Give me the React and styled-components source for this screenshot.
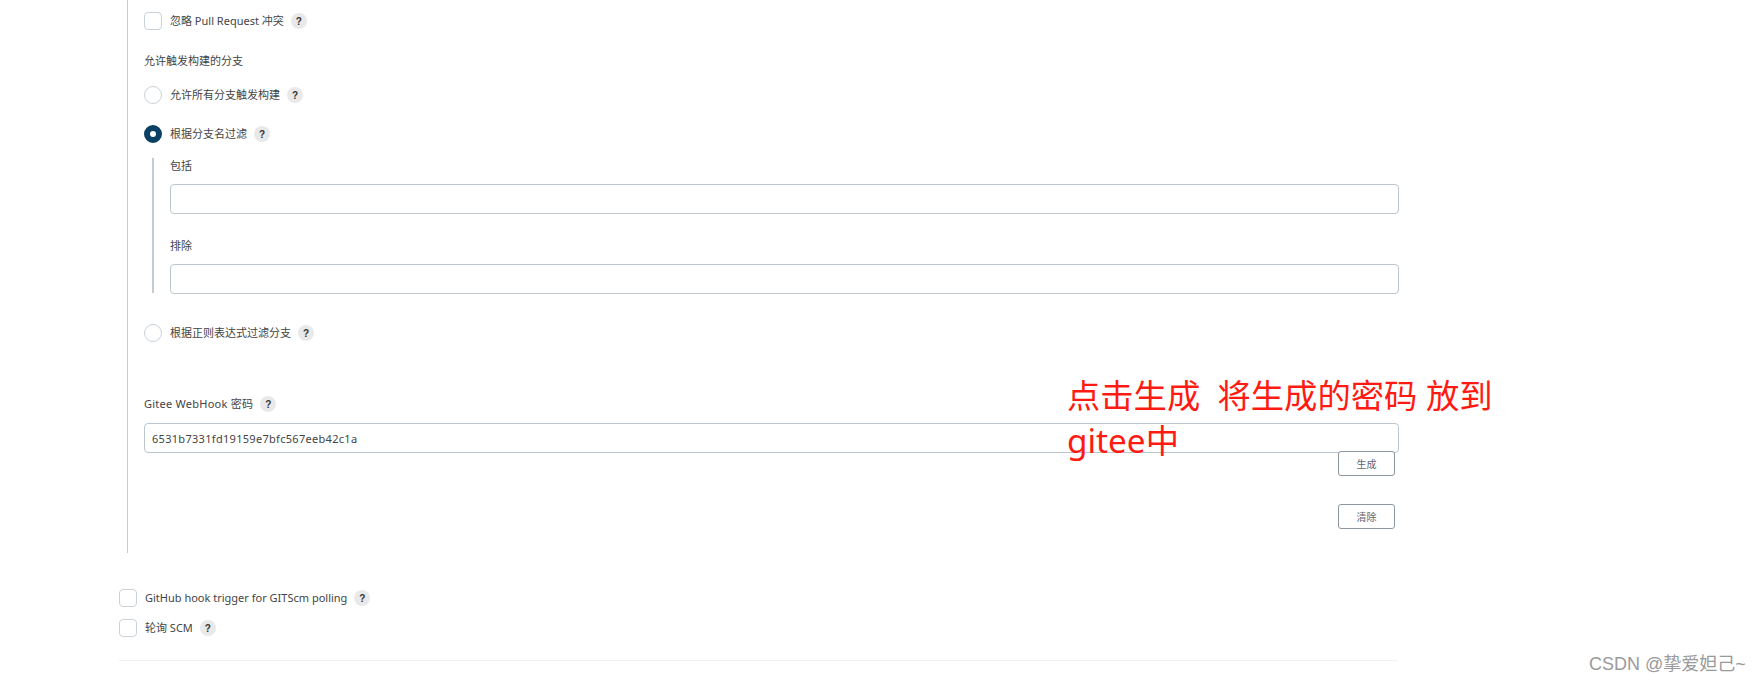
import React from 'react';
import styled, { createGlobalStyle } from 'styled-components';

const GlobalStyle = createGlobalStyle`
  html, body {
    margin: 0;
    padding: 0;
    background: #ffffff;
    overflow: hidden;
  }
  body {
    font-family: "Noto Sans", "Noto Sans CJK SC", sans-serif;
    color: #444444;
  }
`;

const Page = styled.div`
  position: relative;
  width: 1761px;
  height: 682px;
  padding-left: 119px;
  box-sizing: border-box;
`;

const Section = styled.div`
  width: 1272px;
  height: 553px;
  margin-left: 8px;
  padding: 12px 0 0 16px;
  border-left: 1px solid #c3ccd1;
  box-sizing: border-box;
`;

const Row = styled.div`
  display: flex;
  align-items: center;
  height: 18px;
  margin-top: ${({ $top }) => $top}px;
`;

const Checkbox = styled.span`
  flex: none;
  width: 18px;
  height: 18px;
  box-sizing: border-box;
  border: 1.5px solid #c9d2d9;
  border-radius: 4px;
  background: #fff;
`;

const Radio = styled.span`
  flex: none;
  width: 18px;
  height: 18px;
  box-sizing: border-box;
  border-radius: 50%;
  background: #fff;
  border: ${({ $checked }) => ($checked ? '6px solid #0b3f63' : '1.5px solid #c9d2d9')};
`;

const Label = styled.span`
  margin-left: ${({ $gap }) => $gap ?? 8}px;
  font-size: 11px;
  line-height: 18px;
  white-space: nowrap;
  letter-spacing: ${({ $spread }) => $spread ?? 0}px;
`;

const Help = styled.span`
  flex: none;
  display: inline-flex;
  align-items: center;
  justify-content: center;
  width: 16px;
  height: 16px;
  margin-left: 7px;
  border-radius: 50%;
  background: #e9e9e9;
  color: #333;
  font-family: "Liberation Sans", sans-serif;
  font-size: 10px;
  font-weight: 700;
`;

const Caption = styled.div`
  font-size: 11px;
  line-height: 16px;
  margin-top: ${({ $top }) => $top}px;
`;

const Nested = styled.div`
  margin-top: 15px;
  margin-left: 8px;
  padding-left: 16px;
  height: 135px;
  border-left: 2px solid #c3ccd1;
  box-sizing: border-box;
`;

const TextBox = styled.div`
  display: flex;
  align-items: center;
  height: 30px;
  margin-top: ${({ $top }) => $top ?? 0}px;
  padding-left: 7px;
  box-sizing: border-box;
  border: 1px solid #bcc6cc;
  border-radius: 4px;
  font-size: 11px;
  letter-spacing: 0.3px;
`;

const Actions = styled.div`
  display: flex;
  flex-direction: column;
  align-items: flex-end;
  gap: 28px;
  padding-right: 4px;
  margin-top: -2px;
`;

const Button = styled.button`
  width: 57px;
  height: 25px;
  padding: 0;
  border: 1px solid #8e979e;
  border-radius: 3px;
  background: #fff;
  color: #5f6672;
  font-family: inherit;
  font-size: 10px;
`;

const Footer = styled.div`
  padding-top: 36px;
`;

const Divider = styled.div`
  width: 1279px;
  height: 1px;
  margin-top: 23px;
  background: #f1f1f1;
`;

const Annotation = styled.div`
  position: absolute;
  left: 1067px;
  top: 373px;
  width: 445px;
  color: #ff1a12;
  font-size: 33.3px;
  line-height: 45px;
`;

const Watermark = styled.div`
  position: absolute;
  left: 1589px;
  top: 653px;
  color: #9a9a9a;
  font-family: "Liberation Sans", "Noto Sans CJK SC", sans-serif;
  font-size: 18px;
  line-height: 22px;
  white-space: nowrap;
`;

export default function App() {
  return (
    <>
      <GlobalStyle />
      <Page>
        <Section>
          <Row $top={0}>
            <Checkbox />
            <Label>忽略 Pull Request 冲突</Label>
            <Help>?</Help>
          </Row>
          <Caption $top={23}>允许触发构建的分支</Caption>
          <Row $top={17}>
            <Radio />
            <Label>允许所有分支触发构建</Label>
            <Help>?</Help>
          </Row>
          <Row $top={21}>
            <Radio $checked />
            <Label>根据分支名过滤</Label>
            <Help>?</Help>
          </Row>
          <Nested>
            <Caption $top={0}>包括</Caption>
            <TextBox $top={10} />
            <Caption $top={24}>排除</Caption>
            <TextBox $top={10} />
          </Nested>
          <Row $top={31}>
            <Radio />
            <Label>根据正则表达式过滤分支</Label>
            <Help>?</Help>
          </Row>
          <Row $top={53}>
            <Label $gap={0} $spread={0.25}>Gitee WebHook 密码</Label>
            <Help>?</Help>
          </Row>
          <TextBox $top={10}>6531b7331fd19159e7bfc567eeb42c1a</TextBox>
          <Actions>
            <Button>生成</Button>
            <Button>清除</Button>
          </Actions>
        </Section>
        <Footer>
          <Row $top={0}>
            <Checkbox />
            <Label>GitHub hook trigger for GITScm polling</Label>
            <Help>?</Help>
          </Row>
          <Row $top={12}>
            <Checkbox />
            <Label>轮询 SCM</Label>
            <Help>?</Help>
          </Row>
          <Divider />
        </Footer>
        <Annotation>点击生成&nbsp;&nbsp;将生成的密码 放到gitee中</Annotation>
        <Watermark>CSDN @挚爱妲己~</Watermark>
      </Page>
    </>
  );
}
